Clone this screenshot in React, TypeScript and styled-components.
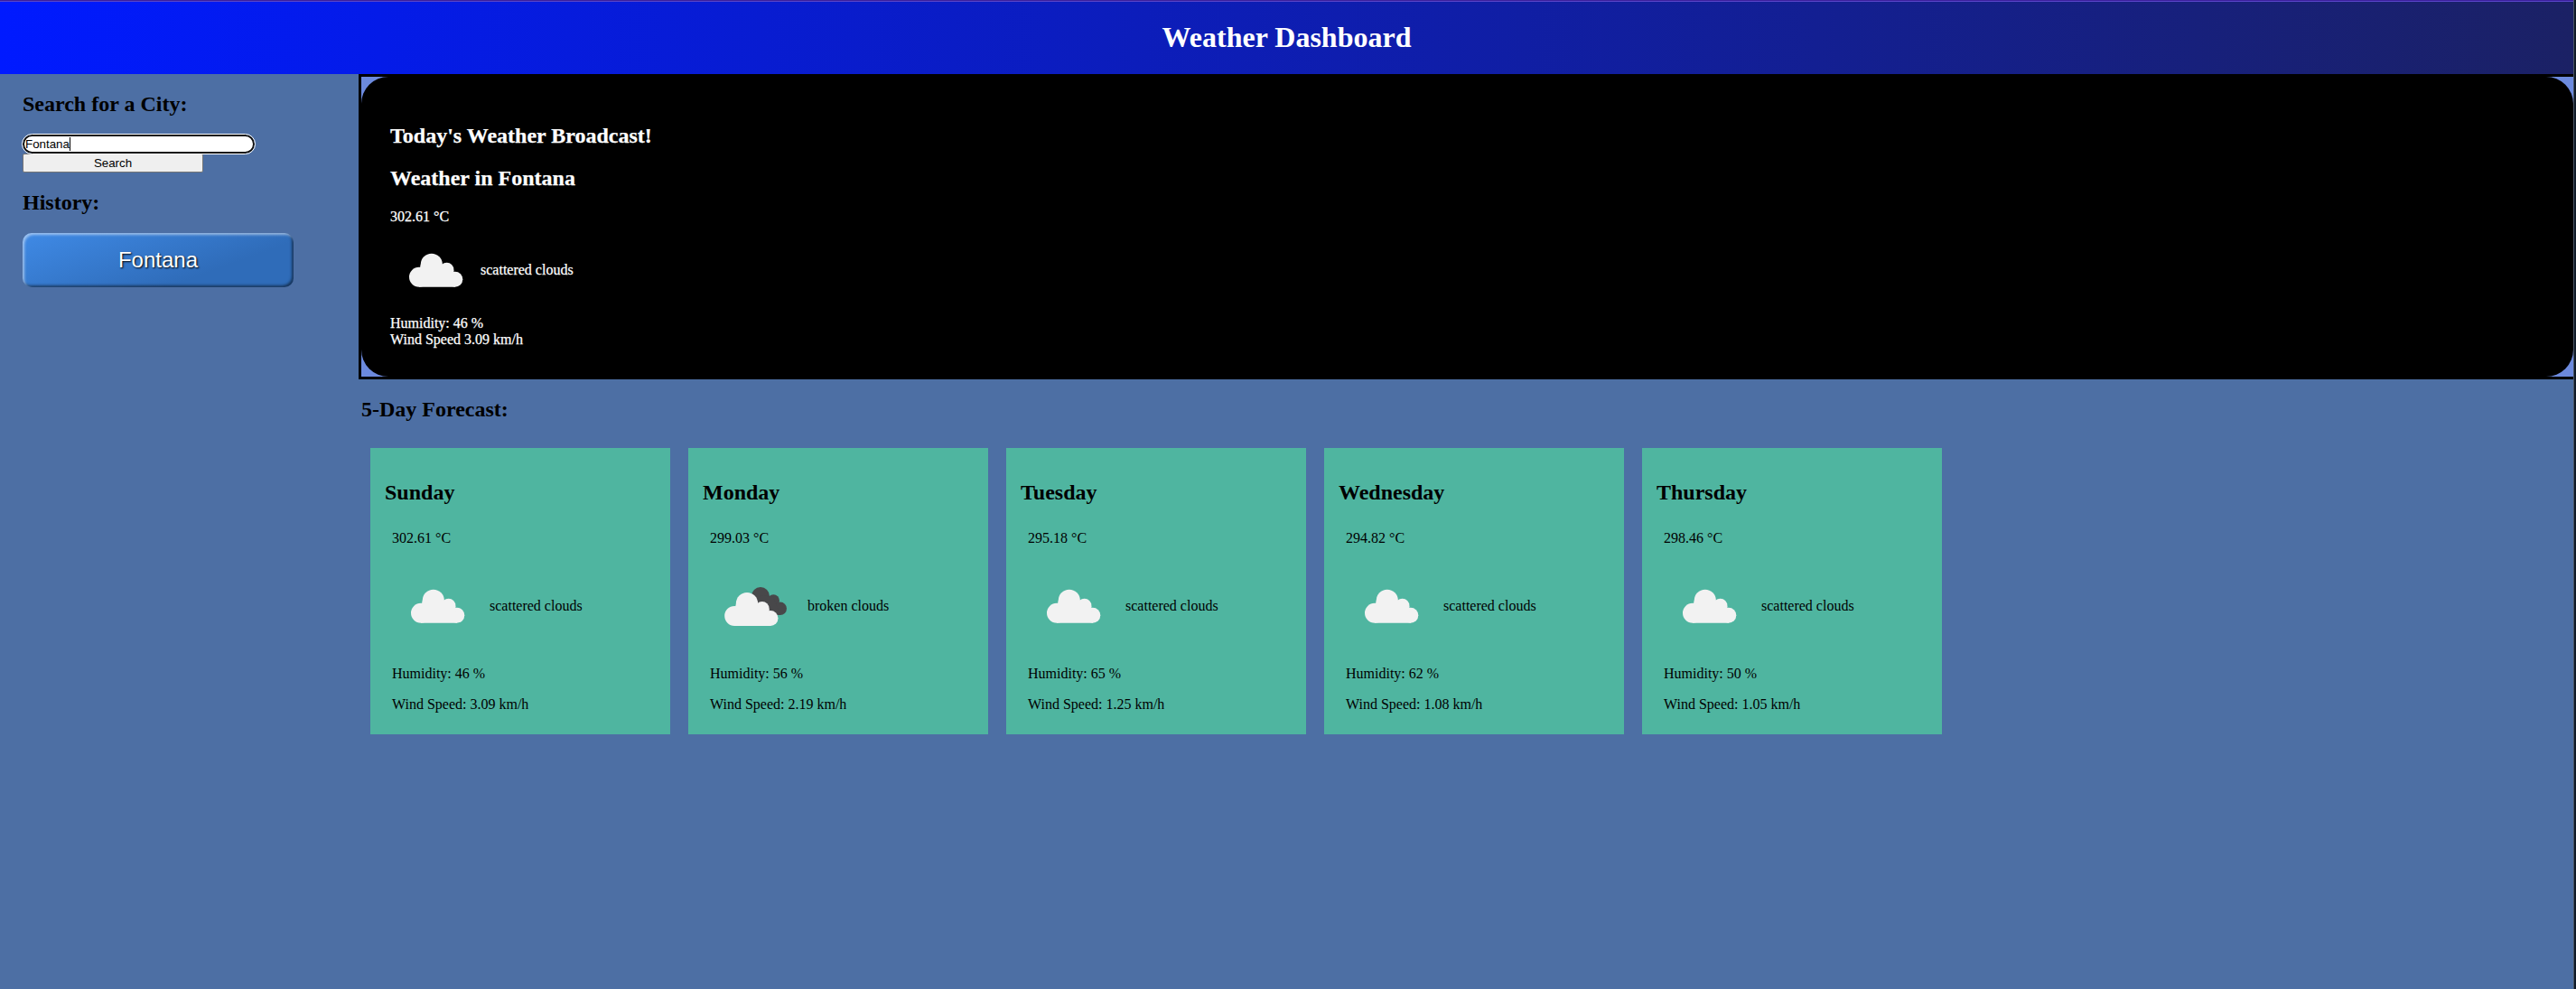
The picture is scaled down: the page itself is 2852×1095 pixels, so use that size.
import React, { useState } from "react";
import styled, { createGlobalStyle } from "styled-components";

const GlobalStyle = createGlobalStyle`
  * { box-sizing: border-box; }
  body {
    margin: 0;
    background: #4e70a5;
    color: #000;
    font: 16px/18px "Liberation Serif", "Times New Roman", serif;
    overflow: hidden;
  }
`;

const Page = styled.div`
  display: flex;
  height: 1095px;
  background: #0f1a2e;
`;

const Window = styled.div`
  display: flex;
  flex-direction: column;
  width: 2849px;
  background: #4d6fa4;
  overflow: hidden;
`;

const WindowEdge = styled.div`
  width: 3px;
  border-left: 1px solid #4a5565;
  background: #0f1a28;
`;

const TopLine = styled.div`
  height: 2px;
  background: #3b1f9c;
  border-bottom: 1px solid #5a45c8;
`;

const Header = styled.header`
  display: flex;
  align-items: center;
  justify-content: center;
  height: 80px;
  padding-bottom: 1px;
  background: linear-gradient(to right, #001aff, #1b2165);
  color: #fff;
`;

const Title = styled.h1`
  margin: 0;
  font-size: 32px;
  line-height: 37px;
`;

const Heading = styled.h2`
  margin: 20px 0;
  font-size: 24px;
  line-height: 27px;
`;

const Body = styled.div`
  display: flex;
  flex: 1;
`;

const Sidebar = styled.aside`
  display: flex;
  flex-direction: column;
  align-items: flex-start;
  width: 397px;
  padding-left: 25px;
`;

const InputBox = styled.div`
  position: relative;
  display: flex;
`;

const CityInput = styled.input`
  width: 257px;
  height: 21px;
  margin: 0;
  padding: 1px;
  border: 2px solid #101010;
  border-radius: 10.5px;
  outline: 1px solid #fff;
  background: #fff;
  color: #000;
  caret-color: transparent;
  font: 13.333px "Liberation Sans", Arial, sans-serif;
`;

const Caret = styled.span`
  position: absolute;
  left: 52px;
  top: 3px;
  width: 1px;
  height: 15px;
  background: #000;
`;

const SearchButton = styled.button`
  width: 200px;
  height: 21px;
  padding: 0;
  border: 1px solid #767676;
  border-radius: 2px;
  background: #efefef;
  color: #000;
  font: 13.333px "Liberation Sans", Arial, sans-serif;
`;

const HistoryButton = styled.button`
  width: 300px;
  height: 60px;
  padding: 0;
  border: 0;
  border-radius: 10px;
  background: linear-gradient(160deg, #3f8ae6, #2f6cb9 70%);
  box-shadow: inset 2px 2px 3px rgba(255, 255, 255, 0.5), inset -2px -2px 3px rgba(0, 0, 0, 0.5);
  color: #fff;
  font: 24px "Liberation Sans", Arial, sans-serif;
  text-shadow: 1px 1px 2px #000;
`;

const Main = styled.main`
  flex: 1;
  min-width: 0;
`;

const TodayFrame = styled.section`
  height: 338px;
  border: 3px solid #000;
  border-right: 0;
  background: #6c8ade;
`;

const Today = styled.div`
  display: flow-root;
  height: 332px;
  padding: 32px;
  border-radius: 30px;
  background: #000;
  color: #fff;
  -webkit-text-stroke: 0.25px #fff;
`;

const Conditions = styled.div<{ $gap: number }>`
  display: flex;
  align-items: center;
  gap: ${(p) => p.$gap}px;
  height: 100px;
`;

const Forecast = styled.section`
  display: flow-root;
  padding-left: 3px;
`;

const Cards = styled.div`
  display: flex;
  gap: 20px;
  padding: 9px 10px;
`;

const Card = styled.article`
  width: 332px;
  height: 317px;
  padding: 16px;
  background: #4fb5a0;
`;

const Details = styled.div`
  display: flex;
  flex-direction: column;
  gap: 16px;
  padding: 8px;
`;

const Cloud = ({ broken = false }: { broken?: boolean }) => (
  <svg width="100" height="100" viewBox="0 0 100 100">
    {broken && (
      <g fill="#48484a">
        <circle cx="56" cy="39" r="10" />
        <circle cx="70.3" cy="44" r="6.7" />
        <circle cx="77.8" cy="52.8" r="7.2" />
        <path d="M56 38L70 40L78 60H66L50 48Z" />
      </g>
    )}
    <g fill="#f2f2f2" transform={broken ? "translate(-4.8 3.2)" : undefined}>
      <circle cx="32" cy="57.7" r="11" />
      <circle cx="45.8" cy="43.8" r="12.1" />
      <circle cx="62.6" cy="49.5" r="7.8" />
      <circle cx="71.8" cy="60.2" r="8.5" />
      <path d="M33.7 44H57.9L62 46L70.4 50V55L72 68.7H32V52Z" />
    </g>
  </svg>
);

const days = [
  { name: "Sunday", temp: "302.61", sky: "scattered clouds", humidity: 46, wind: "3.09" },
  { name: "Monday", temp: "299.03", sky: "broken clouds", humidity: 56, wind: "2.19" },
  { name: "Tuesday", temp: "295.18", sky: "scattered clouds", humidity: 65, wind: "1.25" },
  { name: "Wednesday", temp: "294.82", sky: "scattered clouds", humidity: 62, wind: "1.08" },
  { name: "Thursday", temp: "298.46", sky: "scattered clouds", humidity: 50, wind: "1.05" },
];

export default function App() {
  const [city, setCity] = useState("Fontana");
  return (
    <Page>
      <GlobalStyle />
      <Window>
        <TopLine />
        <Header>
          <Title>Weather Dashboard</Title>
        </Header>
        <Body>
          <Sidebar>
            <Heading>Search for a City:</Heading>
            <InputBox>
              <CityInput value={city} onChange={(e) => setCity(e.target.value)} />
              <Caret />
            </InputBox>
            <SearchButton>Search</SearchButton>
            <Heading>History:</Heading>
            <HistoryButton>Fontana</HistoryButton>
          </Sidebar>
          <Main>
            <TodayFrame>
              <Today>
                <Heading>Today's Weather Broadcast!</Heading>
                <Heading>Weather in Fontana</Heading>
                <div>302.61 °C</div>
                <Conditions $gap={0}>
                  <Cloud />
                  <span>scattered clouds</span>
                </Conditions>
                <div>Humidity: 46 %</div>
                <div>Wind Speed 3.09 km/h</div>
              </Today>
            </TodayFrame>
            <Forecast>
              <Heading>5-Day Forecast:</Heading>
              <Cards>
                {days.map((d) => (
                  <Card key={d.name}>
                    <Heading>{d.name}</Heading>
                    <Details>
                      <div>{d.temp} °C</div>
                      <Conditions $gap={8}>
                        <Cloud broken={d.sky === "broken clouds"} />
                        <span>{d.sky}</span>
                      </Conditions>
                      <div>Humidity: {d.humidity} %</div>
                      <div>Wind Speed: {d.wind} km/h</div>
                    </Details>
                  </Card>
                ))}
              </Cards>
            </Forecast>
          </Main>
        </Body>
      </Window>
      <WindowEdge />
    </Page>
  );
}
